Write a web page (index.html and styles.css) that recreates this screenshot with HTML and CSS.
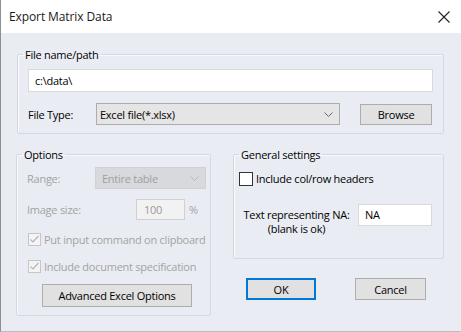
FILE: index.html
```html
<!DOCTYPE html>
<html lang="en">
  <head>
    <meta charset="UTF-8" />
    <title>Export Matrix Data</title>
    <link rel="stylesheet" href="styles.css">
  </head>
  <body>
    <div class="dialog">
      <div class="titlebar">
        <span class="title">Export Matrix Data</span>
        <svg class="close" width="12" height="12" viewBox="0 0 12 12">
          <path d="M0.5 0.5 L11.5 11.5 M11.5 0.5 L0.5 11.5" stroke="#222" stroke-width="1.1" fill="none" />
        </svg>
      </div>

      <div class="content">
        <fieldset class="group file-group">
          <legend>File name/path</legend>
          <div class="text-box path-box">c:\data\</div>
          <div class="type-row">
            <span class="field-label">File Type:</span>
            <div class="combo type-combo">
              <span>Excel file(*.xlsx)</span>
              <svg class="chevron" width="9" height="5" viewBox="0 0 9 5">
                <path d="M0.5 0.5 L4.5 4.5 L8.5 0.5" stroke="#666" fill="none" />
              </svg>
            </div>
            <button class="btn browse-btn">Browse</button>
          </div>
        </fieldset>

        <div class="lower">
          <fieldset class="group options-group">
            <legend>Options</legend>
            <div class="opt-row range-row">
              <span class="field-label disabled">Range:</span>
              <div class="combo range-combo">
                <span>Entire table</span>
                <svg class="chevron" width="9" height="5" viewBox="0 0 9 5">
                  <path d="M0.5 0.5 L4.5 4.5 L8.5 0.5" stroke="#b8b8b8" fill="none" />
                </svg>
              </div>
            </div>
            <div class="opt-row size-row">
              <span class="field-label disabled">Image size:</span>
              <div class="text-box size-box">100</div>
              <span class="disabled pct">%</span>
            </div>
            <div class="check-row disabled">
              <span class="checkbox checked">
                <svg width="11" height="11" viewBox="0 0 11 11">
                  <path d="M1.5 5.5 L4 8 L9.5 2" stroke="#b5b5b5" stroke-width="1.2" fill="none" />
                </svg>
              </span>
              Put input command on clipboard
            </div>
            <div class="check-row disabled">
              <span class="checkbox checked">
                <svg width="11" height="11" viewBox="0 0 11 11">
                  <path d="M1.5 5.5 L4 8 L9.5 2" stroke="#b5b5b5" stroke-width="1.2" fill="none" />
                </svg>
              </span>
              Include document specification
            </div>
            <button class="btn advanced-btn">Advanced Excel Options</button>
          </fieldset>

          <div class="right-col">
            <fieldset class="group general-group">
              <legend>General settings</legend>
              <div class="check-row headers-row">
                <span class="checkbox"></span>
                Include col/row headers
              </div>
              <div class="na-row">
                <div class="na-label">
                  <span>Text representing NA:</span>
                  <span>(blank is ok)</span>
                </div>
                <div class="text-box na-box">NA</div>
              </div>
            </fieldset>
            <div class="actions">
              <button class="btn ok-btn">OK</button>
              <button class="btn cancel-btn">Cancel</button>
            </div>
          </div>
        </div>
      </div>
    </div>
  </body>
</html>
```

FILE: styles.css
```css
* {
  margin: 0;
  padding: 0;
  box-sizing: border-box;
}

body {
  font-family: "Open Sans", "Noto Sans", sans-serif;
  font-size: 11px;
  letter-spacing: -0.25px;
  color: #000;
  background: #e9edf3;
  white-space: nowrap;
}

.dialog {
  width: 461px;
  height: 332px;
  background: #e9edf3;
  border-left: 1px solid #8c8f94;
  border-bottom: 1px solid #b9bec6;
  overflow: hidden;
}

.titlebar {
  height: 33px;
  background: #fff;
  display: flex;
  align-items: center;
  justify-content: space-between;
  padding: 0 11px 0 8px;
}

.title {
  font-size: 12px;
  letter-spacing: -0.1px;
  color: #1a1a1a;
}

.close {
  display: block;
}

.content {
  padding-top: 13px;
}

.group {
  min-width: 0;
  border: 1px solid #d3d8e1;
  box-shadow: inset 1px 1px 0 #f7f9fc;
  border-radius: 2px;
}

.group legend {
  padding: 0 2px;
  line-height: 17px;
  margin-left: -5px;
}

.file-group {
  margin-left: 16px;
  width: 427px;
  padding: 6px 10px 8px 10px;
}

.text-box {
  background: #fff;
  border: 1px solid #d9d9d9;
  height: 23px;
  line-height: 21px;
  padding-left: 6px;
}

.path-box {
  width: 405px;
}

.type-row {
  display: flex;
  align-items: center;
  margin-top: 11px;
}

.field-label {
  width: 68px;
}

.combo {
  display: flex;
  align-items: center;
  justify-content: space-between;
  height: 22px;
  border: 1px solid #adadad;
  background: #e5e5e5;
  padding: 0 6px 0 3px;
}

.type-combo {
  width: 244px;
}

.chevron {
  display: block;
}

.btn {
  font-family: inherit;
  font-size: 11px;
  letter-spacing: -0.25px;
  color: #000;
  background: #e1e1e1;
  border: 1px solid #adadad;
  height: 22px;
}

.browse-btn {
  width: 72px;
  height: 21px;
  margin-left: 20px;
}

.lower {
  display: flex;
  align-items: flex-start;
  margin-top: 12px;
}

.options-group {
  margin-left: 15px;
  width: 195px;
  padding: 4px 2px 8px 10px;
}

.disabled {
  color: #a3a3a3;
}

.opt-row {
  display: flex;
  align-items: center;
}

.range-combo {
  width: 111px;
  background: #d7d9dd;
  border-color: #cfd1d5;
  color: #a0a0a0;
  padding-left: 6px;
}

.size-row {
  margin-top: 10px;
}

.size-row .field-label {
  width: 109px;
}

.size-box {
  width: 49px;
  height: 21px;
  line-height: 19px;
  background: #f2f2f2;
  border-color: #d0d0d0;
  color: #9a9a9a;
  padding-left: 7px;
}

.pct {
  margin-left: 4px;
}

.check-row {
  display: flex;
  align-items: center;
  height: 17px;
  margin-top: 11px;
  padding-left: 1px;
}

.check-row + .check-row {
  margin-top: 10px;
}

.checkbox {
  width: 13px;
  height: 13px;
  border: 1px solid #333;
  background: #fff;
  margin-right: 3px;
  display: flex;
  align-items: center;
  justify-content: center;
}

.checkbox.checked {
  border-color: #c6c6c6;
  background: #f4f4f4;
}

.advanced-btn {
  width: 150px;
  height: 23px;
  margin: 9px 0 0 15px;
  display: block;
}

.right-col {
  margin-left: 22px;
  width: 211px;
}

.general-group {
  width: 211px;
  padding: 0 10px 22px 5px;
}

.general-group legend {
  margin-left: 0;
}

.headers-row {
  margin-top: 7px;
  padding-left: 0;
}

.headers-row .checkbox {
  width: 14px;
  height: 14px;
}

.na-row {
  display: flex;
  align-items: flex-start;
  margin-top: 17px;
}

.na-label {
  display: flex;
  flex-direction: column;
  align-items: center;
  line-height: 14px;
  padding-top: 4px;
  width: 113px;
  margin-left: 1px;
}

.na-box {
  width: 74px;
  height: 22px;
  line-height: 20px;
  margin-left: 5px;
}

.actions {
  display: flex;
  margin-top: 19px;
  padding-left: 13px;
}

.ok-btn {
  width: 70px;
  border: 1px solid #0078d7;
  box-shadow: inset 0 0 0 1px #0078d7;
}

.cancel-btn {
  width: 71px;
  margin-left: 39px;
}
```
